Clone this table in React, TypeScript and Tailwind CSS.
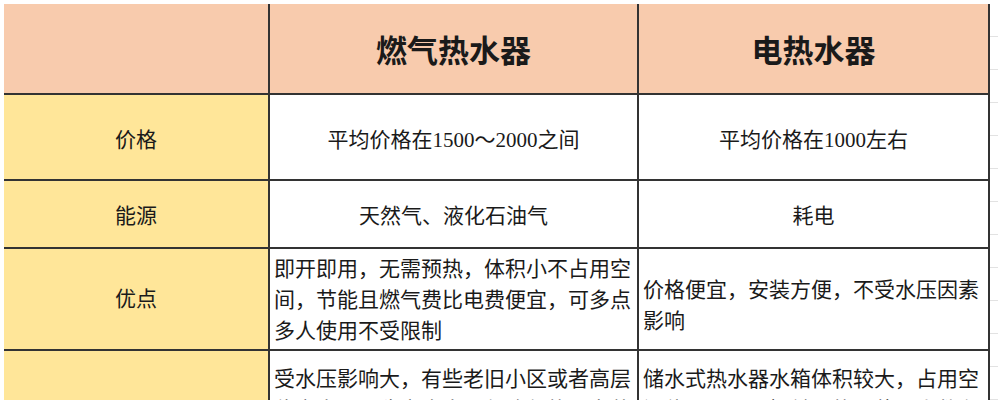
const FONT = { fontFamily: '"Liberation Serif", "Noto Sans CJK SC", serif' };

const ROWS = [
  {
    label: "价格",
    h: "h-[86px] pt-[7px]",
    gas: "平均价格在1500～2000之间",
    elec: "平均价格在1000左右",
    center: true,
  },
  {
    label: "能源",
    h: "h-[68px] pt-[5px]",
    gas: "天然气、液化石油气",
    elec: "耗电",
    center: true,
  },
  {
    label: "优点",
    h: "h-[102px] pt-[2px]",
    gas: "即开即用，无需预热，体积小不占用空间，节能且燃气费比电费便宜，可多点多人使用不受限制",
    elec: "价格便宜，安装方便，不受水压因素影响",
    center: false,
  },
];

const cell = "border-r-2 border-b-2 border-[#333]";

export default function App() {
  return (
    <div className="relative flex h-[400px] w-[998px] overflow-hidden bg-white pt-[4px] pl-[4px]" style={FONT}>
      <div className="grid grid-cols-[266px_369px_351px] content-start text-[#1a1a1a]">
        <div className={`${cell} h-[91px] bg-[#f8cbad]`} />
        <div className={`${cell} flex h-[91px] items-center justify-center bg-[#f8cbad] pt-[8px] text-[31px] font-bold`}>
          燃气热水器
        </div>
        <div className={`${cell} flex h-[91px] items-center justify-center bg-[#f8cbad] pt-[8px] text-[31px] font-bold`}>
          电热水器
        </div>
        {ROWS.map((r) => (
          <div key={r.label} className="contents">
            <div className={`${cell} ${r.h} flex items-center justify-center bg-[#ffe699] text-[21px]`}>
              {r.label}
            </div>
            <div
              className={`${cell} ${r.h} flex items-center px-[4px] text-[21px] leading-[31px] ${
                r.center ? "justify-center text-center" : ""
              }`}
            >
              <span>{r.gas}</span>
            </div>
            <div
              className={`${cell} ${r.h} flex items-center px-[4px] text-[21px] leading-[31px] ${
                r.center ? "justify-center text-center" : "!pt-[14px]"
              }`}
            >
              <span>{r.elec}</span>
            </div>
          </div>
        ))}
        {/* last row runs past the bottom edge; its label sits below the fold */}
        <div className={`${cell} h-[170px] bg-[#ffe699]`} />
        <div className={`${cell} h-[170px] px-[4px] pt-[13px] text-[21px] leading-[31px]`}>
          受水压影响大，有些老旧小区或者高层住户水压不稳定会出现忽冷忽热，安装位置有限制
        </div>
        <div className={`${cell} h-[170px] px-[4px] pt-[13px] text-[21px] leading-[31px]`}>
          储水式热水器水箱体积较大，占用空间位置，需要提前预热，使用人数有限，耗电量较大
        </div>
      </div>
      <div className="flex flex-1 flex-col">
        {Array.from({ length: 13 }).map((_, i) => (
          <div key={i} className="h-[33px] shrink-0 border-b border-[#e2e2e2]" />
        ))}
      </div>
    </div>
  );
}
